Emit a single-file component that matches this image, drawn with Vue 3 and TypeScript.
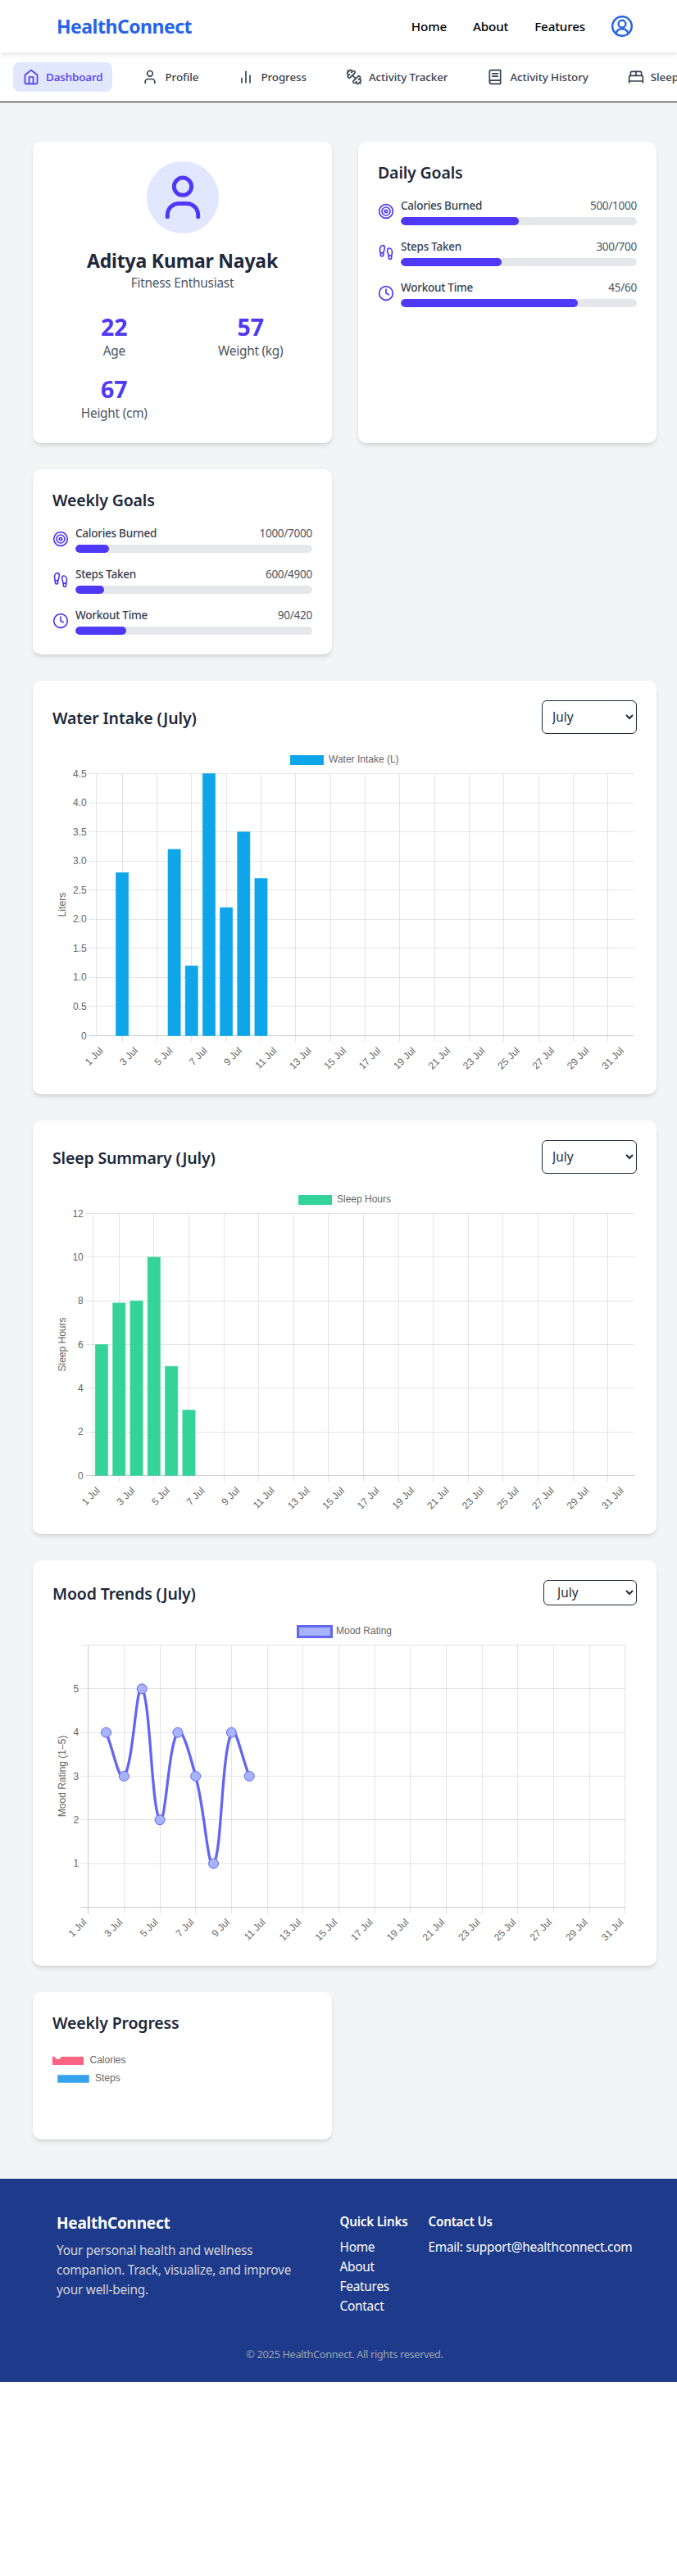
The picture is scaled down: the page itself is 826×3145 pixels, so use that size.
<template>
  <div class="page">
    <header class="topbar">
      <span class="logo">HealthConnect</span>
      <nav class="topnav">
        <a v-for="link in topLinks" :key="link">{{ link }}</a>
        <svg class="account" viewBox="0 0 28 28" fill="none" stroke="currentColor" stroke-width="2.4" stroke-linecap="round">
          <circle cx="14" cy="14" r="11.8" />
          <circle cx="14" cy="11.2" r="4.4" />
          <path d="M6.6 22.6c1-3.4 3.8-5.3 7.4-5.3s6.4 1.9 7.4 5.3" />
        </svg>
      </nav>
    </header>

    <nav class="subnav">
      <a v-for="item in navItems" :key="item.label" class="subnav__item" :class="{ 'subnav__item--active': item.active }">
        <svg class="subnav__icon" viewBox="0 0 24 24" fill="none" stroke="currentColor" stroke-width="2" stroke-linecap="round" stroke-linejoin="round">
          <path v-for="d in item.paths" :key="d" :d="d" />
        </svg>
        <span>{{ item.label }}</span>
      </a>
    </nav>

    <main class="dashboard">
      <section class="card profile">
        <div class="avatar">
          <svg width="56" height="56" viewBox="0 0 56 56" fill="none" stroke="#4f39f6" stroke-width="5" stroke-linecap="round">
            <circle cx="28" cy="14.7" r="10.6" />
            <path d="M9.3 51.8v-2.3a14 14 0 0 1 14-14h9.4a14 14 0 0 1 14 14v2.3" />
          </svg>
        </div>
        <h2 class="profile__name">Aditya Kumar Nayak</h2>
        <p class="profile__role">Fitness Enthusiast</p>
        <div class="stats">
          <div v-for="stat in stats" :key="stat.label" class="stat">
            <div class="stat__value">{{ stat.value }}</div>
            <div class="stat__label">{{ stat.label }}</div>
          </div>
        </div>
      </section>

      <section v-for="group in goalGroups" :key="group.title" class="card">
        <h3 class="card__title goals__title">{{ group.title }}</h3>
        <div class="goals">
          <div v-for="goal in group.goals" :key="goal.label" class="goal">
            <svg class="goal__icon" viewBox="0 0 24 24" fill="none" stroke="currentColor" stroke-width="2" stroke-linecap="round" stroke-linejoin="round">
              <path v-for="d in goalIcons[goal.icon]" :key="d" :d="d" />
            </svg>
            <div class="goal__body">
              <div class="goal__text">
                <span class="goal__label">{{ goal.label }}</span>
                <span class="goal__value">{{ goal.value }}/{{ goal.target }}</span>
              </div>
              <div class="goal__track">
                <div class="goal__fill" :style="{ width: (goal.value / goal.target) * 100 + '%' }" />
              </div>
            </div>
          </div>
        </div>
      </section>

      <section v-for="chart in charts" :key="chart.title" class="card card--wide">
        <div class="chart-head">
          <h3 class="card__title chart-head__title">{{ chart.title }}</h3>
          <select class="month" :class="{ 'month--small': chart.line }">
            <option v-for="m in months" :key="m" :selected="m === 'July'">{{ m }}</option>
          </select>
        </div>
        <svg class="chart" width="713" height="400" viewBox="0 0 713 400">
          <line
            v-for="(g, i) in chart.hLines"
            :key="'h' + i"
            :x1="g.x1" :x2="g.x2" :y1="g.y" :y2="g.y"
            :stroke="g.strong ? 'rgba(0,0,0,0.2)' : 'rgba(0,0,0,0.1)'"
          />
          <line
            v-for="(g, i) in chart.vLines"
            :key="'v' + i"
            :x1="g.x" :x2="g.x" :y1="g.y1" :y2="g.y2"
            :stroke="g.strong ? 'rgba(0,0,0,0.2)' : 'rgba(0,0,0,0.1)'"
          />

          <rect
            v-for="(b, i) in chart.bars"
            :key="'b' + i"
            :x="b.x" :y="b.y" :width="b.w" :height="b.h"
            :fill="chart.color"
            :stroke="chart.color"
            stroke-opacity="0.5"
          />

          <template v-if="chart.line">
            <path :d="chart.line" fill="none" stroke="#6366f1" stroke-width="3.3" />
            <circle v-for="(p, i) in chart.points" :key="'p' + i" :cx="p.x" :cy="p.y" r="6" fill="#a5b4fc" stroke="#6366f1" />
          </template>

          <text v-for="t in chart.yLabels" :key="t.text" class="chart__text" :x="t.x" :y="t.y" text-anchor="end">{{ t.text }}</text>
          <text
            v-for="t in chart.xLabels"
            :key="t.text"
            class="chart__text"
            text-anchor="end"
            :x="t.x" :y="t.y"
            :transform="`rotate(-45 ${t.x} ${t.y})`"
          >{{ t.text }}</text>
          <text
            class="chart__text"
            text-anchor="middle"
            :x="15.5" :y="chart.axisY"
            :transform="`rotate(-90 15.5 ${chart.axisY})`"
          >{{ chart.axisTitle }}</text>

          <rect
            :x="chart.legend.x" :y="chart.legend.y" :width="chart.legend.w" :height="chart.legend.h"
            :fill="chart.legend.fill" :stroke="chart.legend.stroke" :stroke-width="chart.legend.sw"
          />
          <text class="chart__text" :x="chart.legend.textX" :y="chart.legend.textY">{{ chart.legend.text }}</text>
        </svg>
      </section>

      <section class="card weekly">
        <h3 class="card__title">Weekly Progress</h3>
        <svg class="weekly__legend" width="317" height="88" viewBox="0 0 317 88">
          <rect x="0" y="11" width="38" height="10" fill="#ff6384" />
          <circle cx="6.7" cy="10.5" r="3.6" fill="#fff" />
          <text class="chart__text" x="45.5" y="19">Calories</text>
          <rect x="6.5" y="33.5" width="38" height="9" fill="#36a2eb" stroke="#36a2eb" stroke-opacity="0.5" />
          <text class="chart__text" x="52" y="41">Steps</text>
        </svg>
      </section>
    </main>

    <footer class="footer">
      <div class="footer__cols">
        <div class="footer__brand">
          <h4>HealthConnect</h4>
          <p>Your personal health and wellness companion. Track, visualize, and improve your well-being.</p>
        </div>
        <div class="footer__links">
          <h5>Quick Links</h5>
          <a v-for="link in footerLinks" :key="link">{{ link }}</a>
        </div>
        <div class="footer__contact">
          <h5>Contact Us</h5>
          <a>Email: support@healthconnect.com</a>
        </div>
      </div>
      <p class="footer__copy">© 2025 HealthConnect. All rights reserved.</p>
    </footer>
  </div>
</template>

<script setup lang="ts">
interface ChartConfig {
  title: string
  axisTitle: string
  color: string
  left: number
  right: number
  ticks: number[]
  tickFmt: (v: number) => string
  hideTicks?: number[]
  values?: [number, number][]
  moods?: [number, number][]
}

const topLinks = ['Home', 'About', 'Features']
const footerLinks = ['Home', 'About', 'Features', 'Contact']
const months = ['January', 'February', 'March', 'April', 'May', 'June', 'July', 'August', 'September', 'October', 'November', 'December']

const navItems = [
  {
    label: 'Dashboard',
    active: true,
    paths: ['M3 9l9-7 9 7v11a2 2 0 0 1-2 2H5a2 2 0 0 1-2-2z', 'M9 22V12h6v10'],
  },
  {
    label: 'Profile',
    paths: ['M19 21v-2a4 4 0 0 0-4-4H9a4 4 0 0 0-4 4v2', 'M16 7a4 4 0 1 1-8 0 4 4 0 0 1 8 0z'],
  },
  {
    label: 'Progress',
    paths: ['M18 20V10', 'M12 20V4', 'M6 20v-6'],
  },
  {
    label: 'Activity Tracker',
    paths: [
      'M14.4 14.4 9.6 9.6',
      'M18.657 21.485a2 2 0 1 1-2.829-2.828l-1.767 1.768a2 2 0 1 1-2.829-2.829l6.364-6.364a2 2 0 1 1 2.829 2.829l-1.768 1.767a2 2 0 1 1 2.828 2.829z',
      'm21.5 21.5-1.4-1.4',
      'M3.9 3.9 2.5 2.5',
      'M6.404 12.768a2 2 0 1 1-2.829-2.829l1.768-1.767a2 2 0 1 1-2.828-2.829l2.828-2.828a2 2 0 1 1 2.829 2.828l1.767-1.768a2 2 0 1 1 2.829 2.829z',
    ],
  },
  {
    label: 'Activity History',
    paths: ['M4 19.5v-15A2.5 2.5 0 0 1 6.5 2H20v20H6.5a2.5 2.5 0 0 1 0-5H20', 'M8 7h8', 'M8 11h8'],
  },
  {
    label: 'Sleep Tracker',
    paths: ['M2 20v-8a2 2 0 0 1 2-2h16a2 2 0 0 1 2 2v8', 'M4 10V6a2 2 0 0 1 2-2h12a2 2 0 0 1 2 2v4', 'M12 4v6', 'M2 18h20'],
  },
]

const stats = [
  { value: 22, label: 'Age' },
  { value: 57, label: 'Weight (kg)' },
  { value: 67, label: 'Height (cm)' },
]

type GoalIcon = 'target' | 'steps' | 'clock'

const circle = (r: number) => `M${12 - r} 12a${r} ${r} 0 1 0 ${2 * r} 0a${r} ${r} 0 1 0 ${-2 * r} 0z`

const goalIcons: Record<GoalIcon, string[]> = {
  target: [circle(10), circle(6), circle(2)],
  steps: [
    'M4 16v-2.38C4 11.5 2.97 10.5 3 8c.03-2.72 1.49-6 4.5-6C9.37 2 10 3.8 10 5.5c0 3.11-2 5.66-2 8.68V16a2 2 0 1 1-4 0Z',
    'M20 20v-2.38c0-2.12 1.03-3.12 1-5.62-.03-2.72-1.49-6-4.5-6C14.63 6 14 7.8 14 9.5c0 3.11 2 5.66 2 8.68V20a2 2 0 1 0 4 0Z',
    'M16 17h4',
    'M4 13h4',
  ],
  clock: [circle(10), 'M12 6v6l4 2'],
}

const goalGroups: { title: string; goals: { icon: GoalIcon; label: string; value: number; target: number }[] }[] = [
  {
    title: 'Daily Goals',
    goals: [
      { icon: 'target', label: 'Calories Burned', value: 500, target: 1000 },
      { icon: 'steps', label: 'Steps Taken', value: 300, target: 700 },
      { icon: 'clock', label: 'Workout Time', value: 45, target: 60 },
    ],
  },
  {
    title: 'Weekly Goals',
    goals: [
      { icon: 'target', label: 'Calories Burned', value: 1000, target: 7000 },
      { icon: 'steps', label: 'Steps Taken', value: 600, target: 4900 },
      { icon: 'clock', label: 'Workout Time', value: 90, target: 420 },
    ],
  },
]

const TOP = 32.5
const BOTTOM = 352.5
const crisp = (v: number) => Math.round(v) + 0.5

// same curve maths as chart.js bezier tension
function splinePath(pts: { x: number; y: number }[], t = 0.4) {
  const cps = pts.map((cur, i) => {
    const prev = pts[i - 1] ?? cur
    const next = pts[i + 1] ?? cur
    const d01 = Math.hypot(cur.x - prev.x, cur.y - prev.y)
    const d12 = Math.hypot(next.x - cur.x, next.y - cur.y)
    const s = d01 + d12
    const fa = (t * d01) / s
    const fb = (t * d12) / s
    return {
      px: cur.x - fa * (next.x - prev.x),
      py: cur.y - fa * (next.y - prev.y),
      nx: cur.x + fb * (next.x - prev.x),
      ny: cur.y + fb * (next.y - prev.y),
    }
  })
  let d = `M${pts[0].x} ${pts[0].y}`
  for (let i = 1; i < pts.length; i++) {
    d += `C${cps[i - 1].nx} ${cps[i - 1].ny} ${cps[i].px} ${cps[i].py} ${pts[i].x} ${pts[i].y}`
  }
  return d
}

function buildChart(cfg: ChartConfig) {
  const isLine = !!cfg.moods
  const max = cfg.ticks[cfg.ticks.length - 1]
  const yFor = (v: number) => BOTTOM - (v / max) * (BOTTOM - TOP)
  const width = cfg.right - cfg.left
  const step = isLine ? width / 30 : width / 31
  const center = (day: number) => cfg.left + (isLine ? day * step : (day + 0.5) * step)
  const days = Array.from({ length: 16 }, (_, i) => i * 2)

  const hLines = cfg.ticks.map((v) => ({
    x1: cfg.left - 9,
    x2: cfg.right,
    y: crisp(yFor(v) - 0.5),
    strong: v === 0,
  }))

  // bar charts: grid sits between the skipped labels, so the last label has no line of its own
  const vLines = isLine
    ? days.map((d) => ({ x: crisp(center(d) - 0.5), y1: TOP, y2: BOTTOM + 8, strong: d === 0 }))
    : [
        { x: crisp(cfg.left - 0.5), y1: TOP, y2: BOTTOM, strong: false },
        ...days.slice(0, -1).map((d) => ({ x: crisp(center(d) + step - 0.5), y1: TOP, y2: BOTTOM + 8, strong: false })),
      ]

  const yLabels = cfg.ticks
    .filter((v) => !cfg.hideTicks?.includes(v))
    .map((v) => ({ text: cfg.tickFmt(v), x: cfg.left - 11.5, y: yFor(v) + 4 }))

  const xLabels = days.map((d) => ({
    text: `${d + 1} Jul`,
    x: center(d) - 1.3,
    y: BOTTOM + 19,
  }))

  const barW = step * 0.72
  const bars = (cfg.values ?? []).map(([day, v]) => ({
    x: center(day) - barW / 2,
    y: yFor(v),
    w: barW,
    h: BOTTOM - yFor(v),
  }))

  const points = (cfg.moods ?? []).map(([day, v]) => ({ x: center(day), y: yFor(v) }))

  return {
    title: cfg.title,
    axisTitle: cfg.axisTitle,
    color: cfg.color,
    axisY: (TOP + BOTTOM) / 2,
    hLines,
    vLines,
    yLabels,
    xLabels,
    bars,
    points,
    line: isLine ? splinePath(points) : '',
  }
}

const barFmt = (v: number) => (v === 0 ? '0' : v.toFixed(1))

const charts = [
  {
    ...buildChart({
      title: 'Water Intake (July)',
      axisTitle: 'Liters',
      color: '#0ea5e9',
      left: 53.3,
      right: 709.7,
      ticks: [0, 0.5, 1, 1.5, 2, 2.5, 3, 3.5, 4, 4.5],
      tickFmt: barFmt,
      values: [[1, 2.8], [4, 3.2], [5, 1.2], [6, 4.5], [7, 2.2], [8, 3.5], [9, 2.7]],
    }),
    legend: { x: 290.5, y: 10.5, w: 40, h: 11, fill: '#0ea5e9', stroke: '#0ea5e9', sw: 1, text: 'Water Intake (L)', textX: 337, textY: 19 },
  },
  {
    ...buildChart({
      title: 'Sleep Summary (July)',
      axisTitle: 'Sleep Hours',
      color: '#34d399',
      left: 49.3,
      right: 709.7,
      ticks: [0, 2, 4, 6, 8, 10, 12],
      tickFmt: (v) => String(v),
      values: [[0, 6], [1, 7.9], [2, 8], [3, 10], [4, 5], [5, 3]],
    }),
    legend: { x: 300.5, y: 10.5, w: 40, h: 11, fill: '#34d399', stroke: '#34d399', sw: 1, text: 'Sleep Hours', textX: 347, textY: 19 },
  },
  {
    ...buildChart({
      title: 'Mood Trends (July)',
      axisTitle: 'Mood Rating (1–5)',
      color: '#6366f1',
      left: 43.7,
      right: 698.7,
      ticks: [0, 1, 2, 3, 4, 5, 6],
      hideTicks: [0, 6],
      tickFmt: (v) => String(v),
      moods: [[1, 4], [2, 3], [3, 5], [4, 2], [5, 4], [6, 3], [7, 1], [8, 4], [9, 3]],
    }),
    legend: { x: 299.5, y: 9.5, w: 41, h: 13, fill: '#a5b4fc', stroke: '#6366f1', sw: 3, text: 'Mood Rating', textX: 346, textY: 19 },
  },
]
</script>

<style>
body {
  background: #fff;
}
</style>

<style scoped>
.page {
  font-family: 'Noto Sans', Roboto, sans-serif;
  color: #1f2937;
}

.topbar {
  position: relative;
  z-index: 2;
  display: flex;
  align-items: center;
  justify-content: space-between;
  height: 64px;
  padding: 0 54px 0 69px;
  background: #fff;
  box-shadow: 0 2px 6px rgba(0, 0, 0, 0.12);
}

.logo {
  font-size: 23px;
  letter-spacing: -0.5px;
  font-weight: 700;
  color: #2563eb;
}

.topnav {
  display: flex;
  align-items: center;
  gap: 32px;
  font-size: 15.2px;
  letter-spacing: -0.15px;
  font-weight: 500;
  color: #000;
}

.account {
  width: 28px;
  height: 28px;
  margin: 0 -1px;
  color: #2563eb;
}

.subnav {
  display: flex;
  gap: 24px;
  padding: 12px 16px;
  overflow: hidden;
  background: #fff;
  border-bottom: 1px solid #111;
}

.subnav__item {
  display: flex;
  flex: none;
  align-items: center;
  gap: 8px;
  height: 36px;
  padding: 0 12px;
  border-radius: 8px;
  font-size: 13.4px;
  letter-spacing: -0.08px;
  font-weight: 500;
  color: #374151;
}

.subnav__item--active {
  background: #e0e7ff;
  color: #4f39f6;
}

.subnav__icon {
  width: 20px;
  height: 20px;
  flex: none;
}

.dashboard {
  display: grid;
  grid-template-columns: 1fr 1fr;
  gap: 32px;
  padding: 48px 25px 48px 40px;
  background: #f3f4f6;
}

.card {
  padding: 24px;
  border-radius: 10px;
  background: #fff;
  box-shadow: 0 4px 6px -1px rgba(0, 0, 0, 0.1), 0 2px 4px -2px rgba(0, 0, 0, 0.1);
}

.card--wide {
  grid-column: span 2;
}

.card__title {
  margin: 0;
  font-size: 19.5px;
  letter-spacing: -0.15px;
  line-height: 28px;
  font-weight: 600;
  color: #1e293b;
}

.profile {
  display: flex;
  flex-direction: column;
  align-items: center;
  grid-row: 1;
}

.avatar {
  display: flex;
  align-items: center;
  justify-content: center;
  width: 88px;
  height: 88px;
  border-radius: 50%;
  background: #e0e7ff;
}

.profile__name {
  margin: 17px 0 0;
  font-size: 23px;
  letter-spacing: -0.2px;
  line-height: 32px;
  font-weight: 700;
  color: #1e293b;
}

.profile__role {
  margin: 0;
  font-size: 15.4px;
  letter-spacing: -0.25px;
  line-height: 24px;
  color: #4b5563;
}

.stats {
  display: grid;
  grid-template-columns: 1fr 1fr;
  gap: 16px;
  width: 100%;
  margin-top: 23px;
  text-align: center;
}

.stat__value {
  font-size: 28.5px;
  line-height: 36px;
  font-weight: 700;
  color: #4f39f6;
}

.stat__label {
  font-size: 15.4px;
  letter-spacing: -0.25px;
  line-height: 24px;
  color: #4b5563;
}

.goals__title {
  margin-bottom: 16px;
}

.goals {
  display: flex;
  flex-direction: column;
  gap: 16px;
}

.goal {
  display: flex;
  align-items: center;
  gap: 8px;
}

.goal__icon {
  width: 20px;
  height: 20px;
  flex: none;
  color: #4f39f6;
}

.goal__body {
  flex: 1;
}

.goal__text {
  display: flex;
  justify-content: space-between;
  margin-bottom: 4px;
  font-size: 13.5px;
  letter-spacing: -0.25px;
  line-height: 20px;
}

.goal__label {
  font-weight: 500;
  color: #374151;
}

.goal__value {
  color: #4b5563;
}

.goal__track {
  height: 10px;
  border-radius: 5px;
  background: #e5e7eb;
  overflow: hidden;
}

.goal__fill {
  height: 100%;
  border-radius: 5px;
  background: #4f39f6;
}

.chart-head {
  display: flex;
  align-items: center;
  justify-content: space-between;
  margin-bottom: 16px;
}

.chart-head__title {
  padding-top: 3px;
}

.month {
  width: 116px;
  height: 41px;
  padding: 0 8px;
  border: 1px solid #1f2937;
  border-radius: 6px;
  background: #fff;
  font: inherit;
  font-size: 15.4px;
  color: #1f2937;
}

.month--small {
  width: 114px;
  height: 31px;
  padding: 0 12px;
}

.chart {
  display: block;
}

.chart__text {
  font-family: 'Liberation Sans', Arial, sans-serif;
  font-size: 12px;
  fill: #666;
}

.weekly__legend {
  display: block;
  margin-top: 16px;
}

.footer {
  padding: 40px 54px 24px 69px;
  background: #1e3a8a;
  color: #fff;
}

.footer__cols {
  display: flex;
}

.footer__brand {
  flex: none;
  width: 345.5px;
}

.footer__brand h4 {
  margin: 0 0 8px;
  font-size: 19px;
  letter-spacing: -0.25px;
  line-height: 28px;
  font-weight: 700;
}

.footer__brand p {
  width: 300px;
  margin: 0;
  font-size: 15.4px;
  letter-spacing: -0.25px;
  line-height: 24px;
  color: #d1d5db;
}

.footer__links {
  flex: none;
  width: 108px;
}

.footer__links h5,
.footer__contact h5 {
  margin: 0 0 8px;
  font-size: 15.2px;
  letter-spacing: -0.2px;
  line-height: 24px;
  font-weight: 600;
}

.footer__links a,
.footer__contact a {
  display: block;
  font-size: 15.4px;
  letter-spacing: -0.25px;
  line-height: 24px;
  white-space: nowrap;
}

.footer__copy {
  margin: 36px 0 0;
  font-size: 12.8px;
  letter-spacing: -0.35px;
  line-height: 20px;
  text-align: center;
  color: #9ca3af;
}
</style>
